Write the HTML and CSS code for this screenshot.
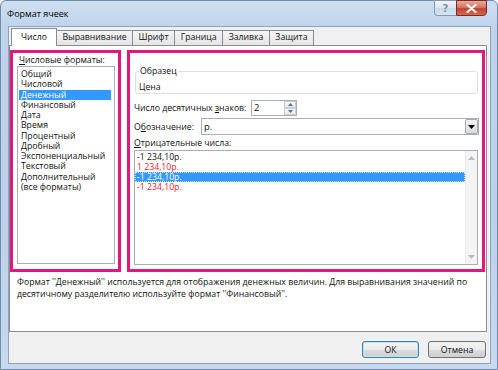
FILE: index.html
```html
<!DOCTYPE html>
<html lang="ru">
<head>
<meta charset="utf-8">
<title>Формат ячеек</title>
<link rel="stylesheet" href="styles.css">
</head>
<body>
<div class="window">
  <div class="titlebar">
    <span class="title">Формат ячеек</span>
    <div class="caption-btns">
      <span class="cbtn help">?</span>
      <span class="cbtn close"><svg width="11" height="9" viewBox="0 0 11 9"><path d="M1.5 1 L9.5 8 M9.5 1 L1.5 8" stroke="#fff" stroke-width="2.2" stroke-linecap="round"/></svg></span>
    </div>
  </div>
  <div class="client">
    <div class="tabs">
      <div class="tab active">Число</div>
      <div class="tab">Выравнивание</div>
      <div class="tab">Шрифт</div>
      <div class="tab">Граница</div>
      <div class="tab">Заливка</div>
      <div class="tab">Защита</div>
    </div>
    <div class="panel">
      <div class="panes">
        <div class="callout left">
          <div class="label"><u>Ч</u>исловые форматы:</div>
          <div class="listbox">
            <div class="item">Общий</div>
            <div class="item">Числовой</div>
            <div class="item selected">Денежный</div>
            <div class="item">Финансовый</div>
            <div class="item">Дата</div>
            <div class="item">Время</div>
            <div class="item">Процентный</div>
            <div class="item">Дробный</div>
            <div class="item">Экспоненциальный</div>
            <div class="item">Текстовый</div>
            <div class="item">Дополнительный</div>
            <div class="item">(все форматы)</div>
          </div>
        </div>
        <div class="callout right">
          <fieldset class="sample">
            <legend>Образец</legend>
            <div class="sample-val">Цена</div>
          </fieldset>
          <div class="field">
            <span class="flabel dec">Число десятичных <u>з</u>наков:</span>
            <div class="spin">
              <span class="spin-val">2</span>
              <span class="spin-btns">
                <span class="sbtn"><svg width="5" height="3" viewBox="0 0 5 3"><path d="M0 3 L2.5 0 L5 3 Z" fill="#5a6a7e"/></svg></span>
                <span class="sbtn"><svg width="5" height="3" viewBox="0 0 5 3"><path d="M0 0 L2.5 3 L5 0 Z" fill="#5a6a7e"/></svg></span>
              </span>
            </div>
          </div>
          <div class="field">
            <span class="flabel sym">О<u>б</u>означение:</span>
            <div class="combo">
              <span class="combo-val">р.</span>
              <span class="drop"><svg width="7" height="4" viewBox="0 0 7 4"><path d="M0 0 L3.5 4 L7 0 Z" fill="#000"/></svg></span>
            </div>
          </div>
          <div class="label neg-label"><u>О</u>трицательные числа:</div>
          <div class="neglist">
            <div class="nitems">
              <div class="nitem">-1 234,10р.</div>
              <div class="nitem red">1 234,10р.</div>
              <div class="nitem sel">-1 234,10р.</div>
              <div class="nitem red">-1 234,10р.</div>
            </div>
            <div class="vscroll">
              <svg width="7" height="4" viewBox="0 0 7 4"><path d="M0 4 L3.5 0 L7 4 Z" fill="#b8bcc2"/></svg>
              <svg width="7" height="4" viewBox="0 0 7 4"><path d="M0 0 L3.5 4 L7 0 Z" fill="#b8bcc2"/></svg>
            </div>
          </div>
        </div>
      </div>
      <p class="desc">Формат ''Денежный'' используется для отображения денежных величин. Для выравнивания значений по<br>десятичному разделителю используйте формат ''Финансовый''.</p>
    </div>
    <div class="buttons">
      <button class="btn default">ОК</button>
      <button class="btn">Отмена</button>
    </div>
  </div>
</div>
</body>
</html>
```

FILE: styles.css
```css
* { box-sizing: border-box; }

body {
  margin: 0;
  width: 498px;
  height: 370px;
  overflow: hidden;
  background: #ffffff;
  font-family: "Open Sans", "Noto Sans", sans-serif;
  font-size: 8.7px;
  color: #111;
}

u { text-decoration: underline; text-underline-offset: 1px; }

.window {
  width: 498px;
  height: 370px;
  display: flex;
  flex-direction: column;
  border: 1px solid #6f8bad;
  border-radius: 6px 6px 0 0;
  padding: 0 6px 5px 7px;
  background: linear-gradient(to bottom, #cfdff1 0, #bfd4eb 26px, #bcd1e9 60%, #c7d9ed 100%);
}

.titlebar {
  height: 25px;
  display: flex;
  align-items: flex-start;
}

.title {
  flex: 1;
  margin-left: -1px;
  padding-top: 6px;
  line-height: 13px;
  font-size: 9px;
  color: #000;
}

.caption-btns {
  display: flex;
  margin-top: -1px;
  margin-right: 4px;
}

.cbtn {
  height: 16px;
  display: flex;
  align-items: center;
  justify-content: center;
}

.help {
  width: 22px;
  border: 1px solid #8598b0;
  border-right: none;
  border-radius: 0 0 0 4px;
  background: linear-gradient(to bottom, #f0f5fb 0, #dae6f3 50%, #c8d9eb 51%, #d6e4f2 100%);
  color: #8190a4;
  font-size: 10px;
  font-weight: bold;
  font-family: "DejaVu Sans", sans-serif;
}

.close {
  width: 31px;
  border: 1px solid #7a2b22;
  border-radius: 0 0 4px 0;
  background: linear-gradient(to bottom, #e9a99d 0, #d57767 45%, #c2412f 55%, #d26a54 100%);
}

.client {
  flex: 1;
  display: flex;
  flex-direction: column;
  background: #f0f0f0;
  border: 1px solid #8da3bf;
  padding-top: 1px;
}

.tabs {
  display: flex;
  align-items: flex-end;
  height: 17px;
  margin-left: 2px;
  position: relative;
  z-index: 1;
}

.tab {
  height: 15px;
  padding: 0 5.5px;
  line-height: 13px;
  border: 1px solid #898c95;
  border-bottom: none;
  margin-left: -1px;
  background: linear-gradient(to bottom, #f5f5f5, #e4e4e4);
  white-space: nowrap;
}

.tab.active {
  height: 18px;
  margin-bottom: -1px;
  margin-left: 0;
  margin-right: -1px;
  padding: 0 9px;
  line-height: 17px;
  background: #ffffff;
  position: relative;
  z-index: 2;
}

.tab.active + .tab { margin-left: 0; }

.panel {
  height: 287px;
  margin-right: 3px;
  background: #ffffff;
  border: 1px solid #898c95;
  padding-top: 4px;
}

.panes {
  display: flex;
  gap: 6px;
  height: 222px;
}

.callout {
  border: 3px solid #e0177f;
  height: 222px;
}

.callout.left { width: 111px; }

.callout.right {
  width: 358px;
  padding: 0 4px 0 4px;
}

.label {
  line-height: 12px;
  white-space: nowrap;
}

.left .label {
  margin-top: 1px;
  padding-left: 6px;
}

.listbox {
  margin-left: 4px;
  width: 98px;
  height: 198px;
  border: 1px solid #abadb3;
  padding: 2px 0 0 1px;
  position: relative;
}

.item {
  width: 92px;
  height: 10.25px;
  line-height: 10.25px;
  padding-left: 2px;
  white-space: nowrap;
}

.item.selected {
  background: #3399ff;
  color: #ffffff;
}

.sample {
  margin: 12px 0 0 1px;
  padding: 0 0 0 3px;
  border: 1px solid #dadfe4;
  border-radius: 3px;
  min-inline-size: 0;
}

.sample legend {
  padding: 0 1px;
  line-height: 12px;
}

.sample-val {
  margin-top: 4px;
  line-height: 12px;
}

.field {
  display: flex;
  align-items: center;
  margin-top: 2px;
}

.sample + .field { margin-top: 6px; }

.flabel {
  white-space: nowrap;
  line-height: 12px;
}

.flabel.dec { width: 117px; }
.flabel.sym { width: 67px; }

.spin {
  width: 46px;
  height: 16px;
  border: 1px solid #abadb3;
  background: #fff;
  display: flex;
}

.spin-val {
  flex: 1;
  padding-left: 2px;
  line-height: 14px;
  font-size: 9.5px;
}

.spin-btns {
  width: 12px;
  display: flex;
  flex-direction: column;
}

.sbtn {
  flex: 1;
  display: flex;
  align-items: center;
  justify-content: center;
  border: 1px solid #c9ced6;
  background: linear-gradient(to bottom, #f7f8fa, #e6e9ee);
}

.combo {
  width: 278px;
  height: 17px;
  margin-right: -1px;
  border: 1px solid #abadb3;
  background: #fff;
  display: flex;
  align-items: center;
}

.combo-val {
  flex: 1;
  padding-left: 2px;
  font-size: 9.5px;
}

.drop {
  width: 13px;
  height: 15px;
  display: flex;
  align-items: center;
  justify-content: center;
  border: 1px solid #a7abb2;
  border-radius: 2px;
  background: linear-gradient(to bottom, #f3f3f3, #dcdcdc);
}

.neg-label { margin-top: 2px; }

.neglist {
  margin-top: 1px;
  width: 344px;
  height: 115px;
  border: 1px solid #abadb3;
  display: flex;
}

.nitems {
  flex: 1;
  padding-top: 1px;
}

.nitem {
  height: 10px;
  line-height: 10px;
  padding-left: 2px;
  white-space: nowrap;
}

.nitem.red { color: #e8202a; }

.nitem.sel {
  background: #3399ff;
  color: #fff;
  outline: 1px dotted #c4dcf5;
  outline-offset: -1px;
}

.vscroll {
  width: 12px;
  background: #f4f4f5;
  border-left: 1px solid #eaeaea;
  display: flex;
  flex-direction: column;
  justify-content: space-between;
  align-items: center;
  padding: 5px 0 5px;
}

.desc {
  margin: 4px 0 0 0;
  padding-left: 7px;
  line-height: 12px;
  white-space: nowrap;
}

.buttons {
  display: flex;
  justify-content: flex-end;
  gap: 9px;
  margin-top: 9px;
  padding-right: 4px;
}

.btn {
  height: 17px;
  width: 58px;
  padding: 0;
  font-family: "Open Sans", "Noto Sans", sans-serif;
  font-size: 8.7px;
  color: #111;
  border: 1px solid #707070;
  border-radius: 3px;
  background: linear-gradient(to bottom, #f4f4f4 0, #ebebeb 50%, #dddddd 51%, #cfcfcf 100%);
}

.btn.default {
  width: 57px;
  border-color: #3c7fb1;
  box-shadow: inset 0 0 0 1px #b9e4f8;
}
```
